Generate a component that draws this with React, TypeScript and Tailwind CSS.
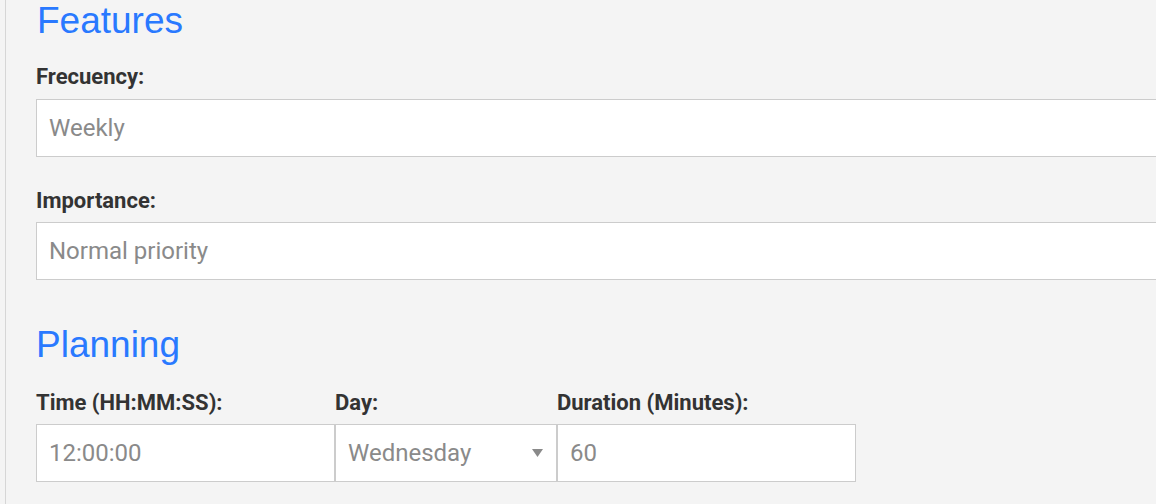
const font = { fontFamily: "Roboto, 'Noto Sans', sans-serif" };

function Label({ children, className = "" }: { children: React.ReactNode; className?: string }) {
  return (
    <div className={`text-[22px] leading-[26px] font-bold text-[#333] ${className}`}>{children}</div>
  );
}

function Heading({ children, className = "" }: { children: React.ReactNode; className?: string }) {
  return (
    <h2
      className={`text-[37px] leading-[42px] text-[#2979ff] font-['Liberation_Sans',Arial,sans-serif] ${className}`}
    >
      {children}
    </h2>
  );
}

function Field({ value, className = "" }: { value: string; className?: string }) {
  return (
    <div
      className={`h-[58px] bg-white border border-[#cccccc] flex items-center pl-[12px] text-[24px] text-[#8a8a8a] ${className}`}
    >
      {value}
    </div>
  );
}

export default function App() {
  return (
    <div className="w-[1156px] h-[504px] overflow-hidden bg-[#f4f4f4]" style={font}>
      <div className="ml-[5px] h-full border-l border-[#d6d6d6] pl-[30px]">
        {/* Features */}
        <Heading className="ml-[1px]">Features</Heading>

        <Label className="mt-[22px]">Frecuency:</Label>
        <Field value="Weekly" className="mt-[9px] w-[1140px]" />

        <Label className="mt-[31px]">Importance:</Label>
        <Field value="Normal priority" className="mt-[8px] w-[1140px]" />

        {/* Planning */}
        <Heading className="mt-[44px]">Planning</Heading>

        <div className="mt-[24px] flex">
          <div className="w-[299px]">
            <Label>Time (HH:MM:SS):</Label>
            <Field value="12:00:00" className="mt-[8px]" />
          </div>
          <div className="w-[222px]">
            <Label>Day:</Label>
            <div className="mt-[8px] h-[58px] bg-white border border-[#cccccc] flex items-center justify-between pl-[12px] pr-[13px] text-[24px] text-[#8a8a8a]">
              <span>Wednesday</span>
              <svg width="11" height="8" viewBox="0 0 11 8">
                <path d="M0 0 L11 0 L5.5 8 Z" fill="#8a8a8a" />
              </svg>
            </div>
          </div>
          <div className="w-[299px]">
            <Label>Duration (Minutes):</Label>
            <Field value="60" className="mt-[8px]" />
          </div>
        </div>
      </div>
    </div>
  );
}
